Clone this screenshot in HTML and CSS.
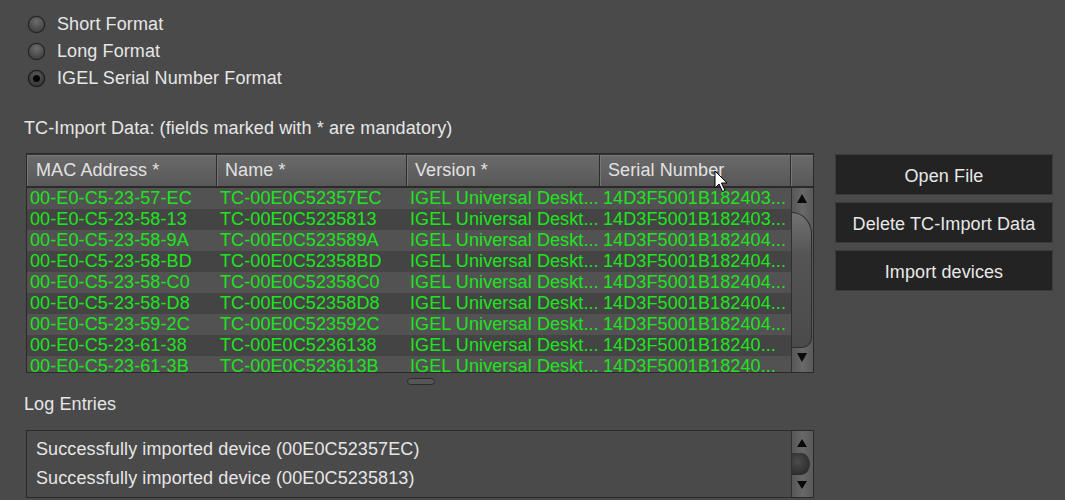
FILE: index.html
```html
<!DOCTYPE html>
<html lang="en">
<head>
  <meta charset="UTF-8">
  <title>TC-Import</title>
  <link rel="stylesheet" href="styles.css">
</head>
<body>

  <div class="radios">
    <label class="radio"><span class="dot"></span>Short Format</label>
    <label class="radio"><span class="dot"></span>Long Format</label>
    <label class="radio"><span class="dot checked"></span>IGEL Serial Number Format</label>
  </div>

  <div class="section-label first">TC-Import Data: (fields marked with * are mandatory)</div>

  <div class="main">
    <div class="table">
      <div class="thead">
        <div class="th">MAC Address *</div>
        <div class="th">Name *</div>
        <div class="th">Version *</div>
        <div class="th">Serial Number</div>
        <div class="th corner"></div>
      </div>
      <div class="tbody">
        <div class="rows" id="rows"></div>
        <div class="scrollbar">
          <span class="arrow up"></span>
          <span class="thumb"></span>
          <span class="arrow down"></span>
        </div>
      </div>
    </div>

    <div class="buttons">
      <button class="button">Open File</button>
      <button class="button">Delete TC-Import Data</button>
      <button class="button">Import devices</button>
    </div>
  </div>

  <div class="splitter"></div>

  <div class="section-label">Log Entries</div>

  <div class="log">
    <div class="log-lines">
      <div>Successfully imported device (00E0C52357EC)</div>
      <div>Successfully imported device (00E0C5235813)</div>
    </div>
    <div class="scrollbar small">
      <span class="arrow up"></span>
      <span class="knob"></span>
      <span class="arrow down"></span>
    </div>
  </div>

  <svg class="cursor" width="16" height="24" viewBox="0 0 16 24">
    <path d="M1 1 L1 18 L5 14 L8.5 21.5 L11 20.5 L7.5 13 L13 13 Z" fill="#fff" stroke="#000" stroke-width="1"/>
  </svg>

  <script>
    // 表示する行データ
    const devices = [
      ['00-E0-C5-23-57-EC', 'TC-00E0C52357EC', '14D3F5001B182403...'],
      ['00-E0-C5-23-58-13', 'TC-00E0C5235813', '14D3F5001B182403...'],
      ['00-E0-C5-23-58-9A', 'TC-00E0C523589A', '14D3F5001B182404...'],
      ['00-E0-C5-23-58-BD', 'TC-00E0C52358BD', '14D3F5001B182404...'],
      ['00-E0-C5-23-58-C0', 'TC-00E0C52358C0', '14D3F5001B182404...'],
      ['00-E0-C5-23-58-D8', 'TC-00E0C52358D8', '14D3F5001B182404...'],
      ['00-E0-C5-23-59-2C', 'TC-00E0C523592C', '14D3F5001B182404...'],
      ['00-E0-C5-23-61-38', 'TC-00E0C5236138', '14D3F5001B18240...'],
      ['00-E0-C5-23-61-3B', 'TC-00E0C523613B', '14D3F5001B18240...']
    ];

    const rows = document.getElementById('rows');
    devices.forEach(d => {
      const row = document.createElement('div');
      row.className = 'row';
      [d[0], d[1], 'IGEL Universal Deskt...', d[2]].forEach(text => {
        const cell = document.createElement('div');
        cell.className = 'td';
        cell.textContent = text;
        row.appendChild(cell);
      });
      rows.appendChild(row);
    });
  </script>

</body>
</html>
```

FILE: styles.css
```css
body {
  margin: 0;
  background: #4a4a4a;
  color: #e6e6e6;
  font-family: 'Liberation Sans', Arial, sans-serif;
  font-size: 18px;
  letter-spacing: 0.1px;
  position: relative;
  height: 500px;
  overflow: hidden;
}

.radios {
  padding: 11px 0 0 28px;
}

.radio {
  display: flex;
  align-items: center;
  gap: 12px;
  height: 27px;
}

.dot {
  width: 15px;
  height: 15px;
  border-radius: 50%;
  border: 1px solid #1c1c1c;
  background: radial-gradient(circle at 50% 30%, #6c6c6c, #474747 70%);
  box-shadow: 0 0 1px rgba(0,0,0,0.6);
  display: flex;
  align-items: center;
  justify-content: center;
}

.dot.checked {
  border-color: #111;
  background: radial-gradient(circle at 50% 30%, #5a5a5a, #3a3a3a 70%);
}

.dot.checked::after {
  content: '';
  width: 7px;
  height: 7px;
  border-radius: 50%;
  background: #050505;
}

.section-label {
  margin: 8px 0 0 24px;
  line-height: 22px;
}

.section-label.first {
  margin-top: 25px;
}

.main {
  display: flex;
  gap: 21px;
  margin-top: 14px;
  padding-left: 26px;
}

.table {
  width: 786px;
  height: 218px;
  border: 1px solid #2a2a2a;
  overflow: hidden;
}

.thead {
  display: grid;
  grid-template-columns: 190px 190px 193px 191px 22px;
  height: 34px;
  border-top: 1px solid #333;
  border-bottom: 2px solid #2a2a2a;
  box-sizing: border-box;
}

.th {
  background: linear-gradient(#6a6a6a, #585858);
  border-right: 1px solid #2c2c2c;
  box-shadow: inset 1px 1px 0 #777;
  color: #e2e2e2;
  padding-left: 8px;
  line-height: 31px;
  white-space: nowrap;
}

.th:first-child {
  padding-left: 9px;
}

.th.corner {
  border-right: none;
}

.tbody {
  display: flex;
  height: 184px;
}

.rows {
  width: 764px;
  border-right: 1px solid #2f2f2f;
}

.row {
  display: grid;
  grid-template-columns: 191px 190px 193px 190px;
  height: 21px;
  line-height: 21px;
  color: #1ee41e;
  background: #525252;
}

.row:nth-child(even) {
  background: #444444;
}

.td {
  padding-left: 2px;
  white-space: nowrap;
  overflow: hidden;
}

.td:first-child {
  padding-left: 3px;
}

.scrollbar {
  position: relative;
  width: 21px;
  height: 184px;
  background: linear-gradient(to right, #575757, #686868 50%, #5a5a5a);
}

.arrow {
  position: absolute;
  left: 5px;
  width: 0;
  height: 0;
  border-left: 5px solid transparent;
  border-right: 5px solid transparent;
}

.arrow.up {
  top: 6px;
  border-bottom: 9px solid #0a0a0a;
}

.arrow.down {
  bottom: 10px;
  border-top: 9px solid #0a0a0a;
}

.thumb {
  position: absolute;
  left: 0;
  top: 24px;
  width: 19px;
  height: 134px;
  border: 1px solid #2e2e2e;
  border-left: none;
  border-radius: 0 20px 10px 0 / 0 22px 10px 0;
  background: linear-gradient(#727272, #555 30%, #4a4a4a);
}

.buttons {
  display: flex;
  flex-direction: column;
  gap: 7px;
  margin-top: 1px;
}

.button {
  width: 218px;
  height: 41px;
  background: #232323;
  border: 1px solid #3b3b3b;
  color: #e8e8e8;
  font-family: inherit;
  font-size: 18px;
  letter-spacing: 0.1px;
  padding: 3px 0 0;
  cursor: pointer;
}

.splitter {
  width: 26px;
  height: 5px;
  margin: 5px 0 0 407px;
  border: 1px solid #2a2a2a;
  border-radius: 4px;
  background: #555;
}

.log {
  display: flex;
  width: 786px;
  height: 66px;
  margin: 15px 0 0 26px;
  border: 1px solid #2a2a2a;
  overflow: hidden;
}

.log-lines {
  flex: 1;
  padding: 4px 0 0 9px;
  line-height: 29px;
  border-right: 1px solid #2f2f2f;
}

.scrollbar.small {
  height: 66px;
}

.scrollbar.small .arrow.up {
  top: 8px;
  border-bottom-width: 8px;
}

.scrollbar.small .arrow.down {
  bottom: 8px;
  border-top-width: 8px;
}

.knob {
  position: absolute;
  left: 0;
  top: 22px;
  width: 18px;
  height: 22px;
  border-radius: 0 50% 50% 0;
  background: radial-gradient(circle at 30% 40%, #4c4c4c, #2a2a2a 80%);
}

.cursor {
  position: absolute;
  left: 714px;
  top: 170px;
}
```
